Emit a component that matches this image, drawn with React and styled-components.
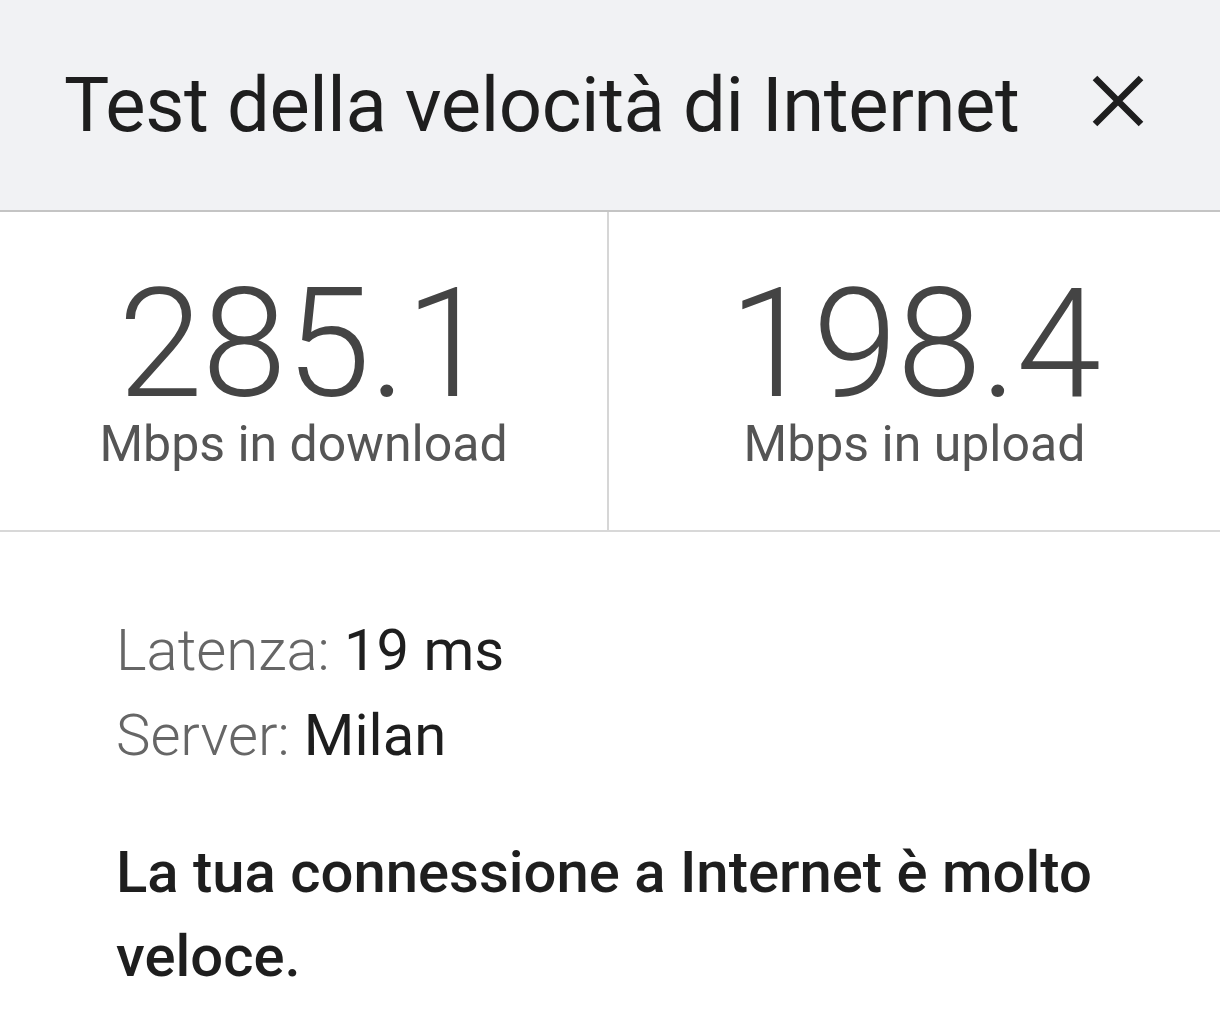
import styled, { createGlobalStyle } from 'styled-components';

const Global = createGlobalStyle`
    body {
        margin: 0;
        background: #fff;
        font-family: Roboto, "Noto Sans", sans-serif;
    }
`;

const Page = styled.div`
    width: 1220px;
    height: 1032px;
    overflow: hidden;
    background: #fff;
`;

const Header = styled.header`
    height: 212px;
    display: flex;
    align-items: center;
    justify-content: space-between;
    padding: 0 76px 0 64px;
    box-sizing: border-box;
    background: #f1f2f4;
    border-bottom: 2px solid #c4c4c4;
`;

const Title = styled.h1`
    margin: 0;
    font-size: 76px;
    font-weight: 400;
    color: #1e1e1e;
    letter-spacing: -0.4px;
`;

const CloseButton = styled.button`
    display: flex;
    margin-top: -8px;
    padding: 0;
    border: none;
    background: none;
    cursor: pointer;
`;

const Stats = styled.section`
    display: grid;
    grid-template-columns: 609px 1fr;
    height: 318px;
    border-bottom: 2px solid #d8d8d8;
`;

const Stat = styled.div`
    display: flex;
    flex-direction: column;
    align-items: center;
    padding-top: 72px;
    border-right: ${p => (p.$divider ? '2px solid #d6d6d6' : 'none')};
`;

const Value = styled.div`
    font-size: 153px;
    font-weight: 300;
    line-height: 120px;
    color: #444;
    letter-spacing: -1px;
`;

const Unit = styled.div`
    margin-top: 10px;
    font-size: 50px;
    line-height: 60px;
    font-weight: 400;
    color: #555;
`;

const Details = styled.section`
    padding: 76px 0 0 116px;
`;

const InfoRow = styled.div`
    font-size: 58px;
    line-height: 85px;
`;

const Label = styled.span`
    font-weight: 300;
    color: #666;
`;

const InfoValue = styled.span`
    font-weight: 400;
    color: #1e1e1e;
`;

const Verdict = styled.p`
    margin: 52px 0 0;
    padding-right: 80px;
    font-size: 58px;
    line-height: 84px;
    font-weight: 500;
    color: #1e1e1e;
`;

function CloseIcon() {
    return (
        <svg width="52" height="52" viewBox="0 0 52 52">
            <path d="M3 3 L49 49 M49 3 L3 49" stroke="#1e1e1e" strokeWidth="6.5" />
        </svg>
    );
}

export default function App() {
    return (
        <Page>
            <Global />
            <Header>
                <Title>Test della velocità di Internet</Title>
                <CloseButton aria-label="Chiudi"><CloseIcon /></CloseButton>
            </Header>
            <Stats>
                <Stat $divider>
                    <Value>285.1</Value>
                    <Unit>Mbps in download</Unit>
                </Stat>
                <Stat>
                    <Value>198.4</Value>
                    <Unit>Mbps in upload</Unit>
                </Stat>
            </Stats>
            <Details>
                <InfoRow><Label>Latenza: </Label><InfoValue>19 ms</InfoValue></InfoRow>
                <InfoRow><Label>Server: </Label><InfoValue>Milan</InfoValue></InfoRow>
                <Verdict>La tua connessione a Internet è molto veloce.</Verdict>
            </Details>
        </Page>
    );
}
